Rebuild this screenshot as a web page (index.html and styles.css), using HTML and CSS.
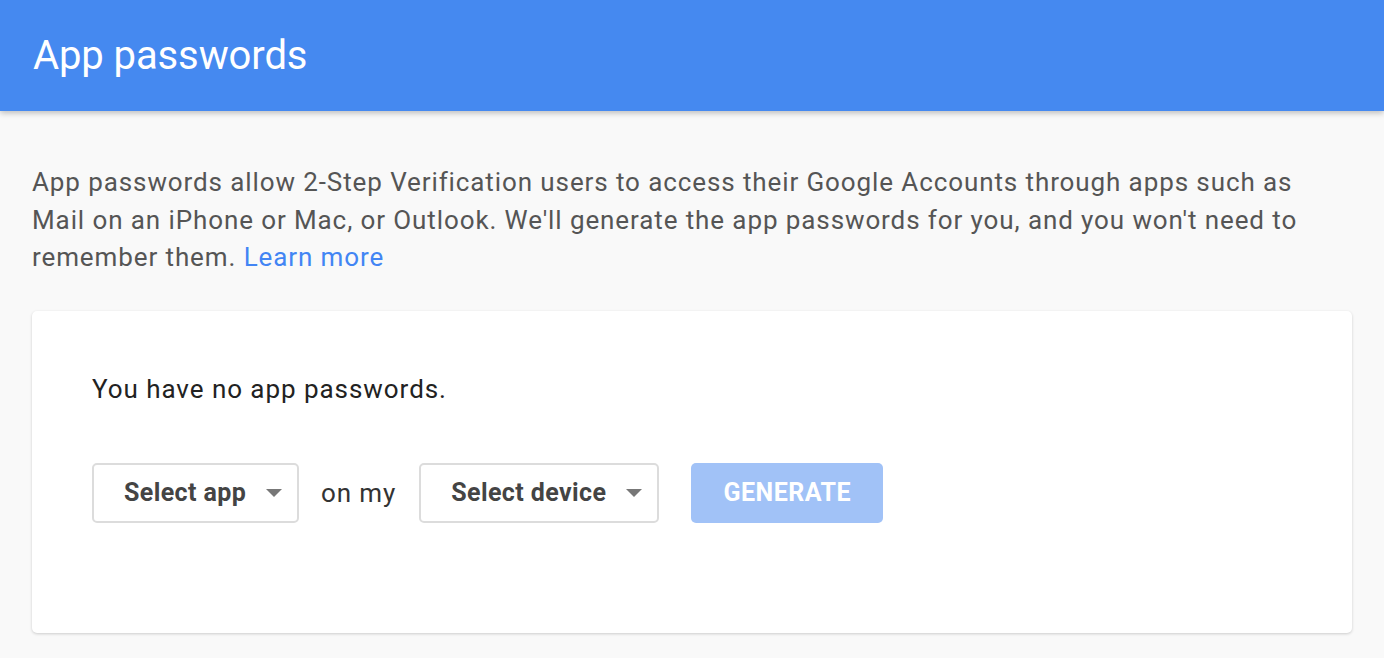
FILE: index.html
```html
<!DOCTYPE html>
<html lang="en">
<head>
<meta charset="utf-8">
<title>App passwords</title>
<link rel="stylesheet" href="styles.css">
</head>
<body>
<header class="appbar">
  <h1 class="title">App passwords</h1>
</header>
<main class="content">
  <p class="intro">App passwords allow 2-Step Verification users to access their Google Accounts through apps such as Mail on an iPhone or Mac, or Outlook. We'll generate the app passwords for you, and you won't need to remember them. <a class="link" href="#">Learn more</a></p>
  <section class="card">
    <p class="empty">You have no app passwords.</p>
    <div class="controls">
      <div class="select select-app"><span class="select-label">Select app</span><span class="caret"></span></div>
      <span class="on-my">on my</span>
      <div class="select select-device"><span class="select-label">Select device</span><span class="caret"></span></div>
      <button class="generate" type="button" disabled>GENERATE</button>
    </div>
  </section>
</main>
</body>
</html>
```
FILE: styles.css
```css
html, body {
  margin: 0;
  padding: 0;
}
body {
  background: #f9f9f9;
  font-family: Roboto, "Liberation Sans", Arial, sans-serif;
  width: 1384px;
  height: 658px;
  overflow: hidden;
}
.appbar {
  height: 111px;
  background: #4589f0;
  box-shadow: 0 2px 6px rgba(0,0,0,0.25);
  display: flex;
  align-items: center;
  padding-left: 33px;
  position: relative;
  z-index: 1;
}
.title {
  margin: 0;
  color: #fff;
  font-size: 40px;
  font-weight: 400;
  line-height: 1;
  letter-spacing: -0.1px;
  padding-top: 1px;
}
.content {
  padding: 0 32px;
}
.intro {
  margin: 53px 0 0;
  font-size: 26px;
  letter-spacing: 0.9px;
  line-height: 37.5px;
  color: #555;
}
.link {
  color: #4285f4;
  text-decoration: none;
}
.card {
  margin-top: 34px;
  background: #fff;
  border-radius: 5px;
  box-shadow: 0 1px 3px rgba(0,0,0,0.18);
  height: 322px;
  box-sizing: border-box;
  padding: 60px 60px 0;
}
.empty {
  margin: 0;
  font-size: 26px;
  letter-spacing: 0.95px;
  line-height: 36px;
  color: #222;
}
.controls {
  margin-top: 56px;
  display: flex;
  align-items: center;
}
.select {
  height: 60px;
  box-sizing: border-box;
  border: 2px solid #dcdcdc;
  border-radius: 5px;
  display: flex;
  align-items: center;
  justify-content: space-between;
  padding-left: 30px;
  padding-right: 15px;
}
.select-app { width: 207px; }
.select-device { width: 240px; }
.select-label {
  font-size: 25px;
  font-weight: 700;
  letter-spacing: 0.4px;
  color: #444;
}
.caret {
  width: 0;
  height: 0;
  border-left: 8px solid transparent;
  border-right: 8px solid transparent;
  border-top: 8px solid #777;
}
.on-my {
  font-size: 26px;
  letter-spacing: 0.9px;
  color: #333;
  margin: 0 23px 0 22px;
}
.generate {
  margin-left: 32px;
  width: 192px;
  height: 60px;
  border: none;
  border-radius: 5px;
  background: #a1c2f7;
  color: #fff;
  font-family: Roboto, "Liberation Sans", Arial, sans-serif;
  font-size: 25px;
  font-weight: 700;
  letter-spacing: 0.5px;
  padding: 0;
}
```
